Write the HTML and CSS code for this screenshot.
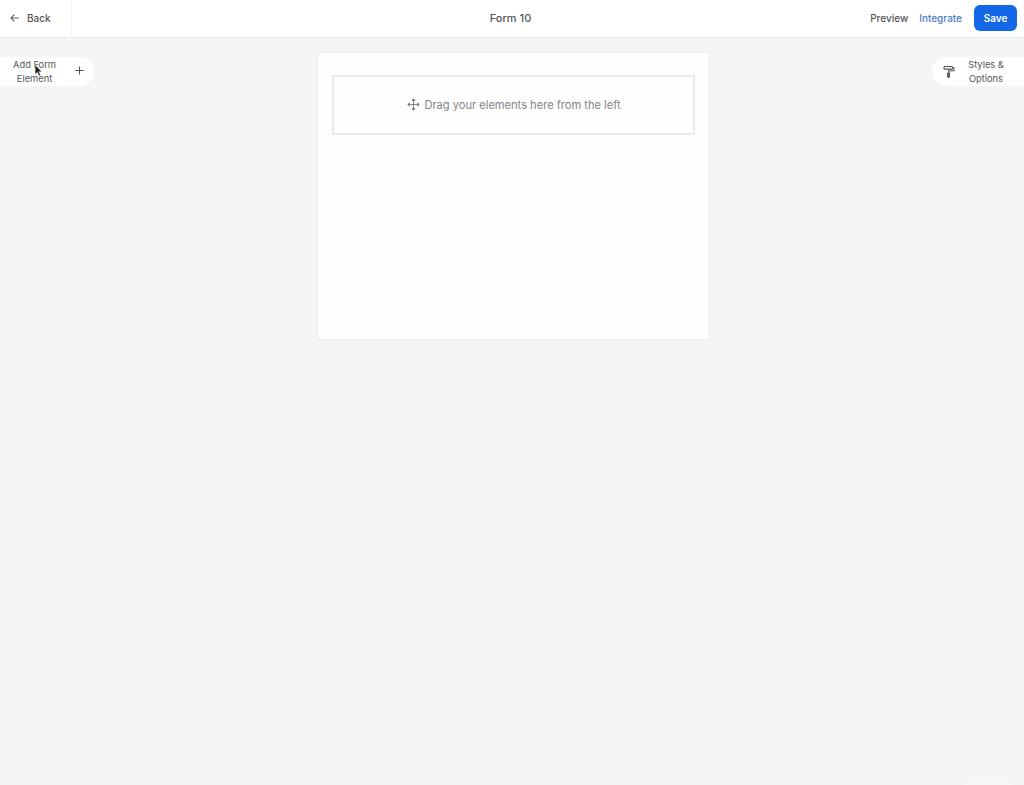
FILE: index.html
```html
<!DOCTYPE html>
<html lang="en">
  <head>
    <meta charset="UTF-8" />
    <meta name="viewport" content="width=device-width, initial-scale=1.0" />
    <title>Form 10</title>
    <link rel="stylesheet" href="styles.css">
  </head>
  <body>
    <header class="topbar">
      <a class="back-link" href="#">
        <svg class="back-icon" width="10" height="10" viewBox="0 0 10 10" fill="none" stroke="#666" stroke-width="1.2">
          <path d="M9 5H1.2M4.4 1.6 1 5l3.4 3.4" />
        </svg>
        Back
      </a>
      <div class="form-title">Form 10</div>
      <div class="actions">
        <a class="preview-link" href="#">Preview</a>
        <a class="integrate-link" href="#">Integrate</a>
        <button class="save-btn" type="button">Save</button>
      </div>
    </header>

    <main class="workspace">
      <button class="float-btn add-btn" type="button">
        <span class="float-label">Add Form Element</span>
        <svg class="plus-icon" width="9" height="9" viewBox="0 0 9 9" stroke="#555" stroke-width="1.1">
          <path d="M4.5 0.5v8M0.5 4.5h8" />
        </svg>
      </button>

      <!-- mouse pointer caught in the capture -->
      <svg class="cursor" width="9" height="13" viewBox="0 0 9 13">
        <path d="M1 0.5v10l2.3-2.1 1.6 3.6 1.7-.8-1.6-3.4h3z" fill="#222" stroke="#fff" stroke-width="0.6" />
      </svg>

      <button class="float-btn styles-btn" type="button">
        <svg width="12" height="14" viewBox="0 0 12 14" fill="none" stroke="#555" stroke-width="1.1">
          <rect x="1" y="1.5" width="8.5" height="2.6" rx="0.8" />
          <path d="M9.5 2.8h1.4v3H5.6v2" />
          <rect x="4.7" y="7.8" width="1.8" height="4.6" rx="0.8" fill="#666" />
        </svg>
        <span class="float-label">Styles &amp; Options</span>
      </button>

      <section class="canvas">
        <div class="dropzone">
          <svg width="13" height="13" viewBox="0 0 14 14" fill="none" stroke="#808080" stroke-width="1">
            <path d="M7 1.5v11M1.5 7h11" />
            <path d="M5.4 2.6 7 0.8l1.6 1.8zM5.4 11.4 7 13.2l1.6-1.8zM2.6 5.4 0.8 7l1.8 1.6zM11.4 5.4 13.2 7l-1.8 1.6z" fill="#808080" />
          </svg>
          Drag your elements here from the left
        </div>
      </section>

      <div class="corner-glow"></div>
    </main>
  </body>
</html>
```

FILE: styles.css
```css
* {
    box-sizing: border-box;
}

html, body {
    height: 100%;
}

body {
    margin: 0;
    display: flex;
    flex-direction: column;
    overflow: hidden;
    font-family: Inter, "Liberation Sans", sans-serif;
    font-size: 10px;
    color: #555;
    background-color: #F4F6F4;
}

a {
    text-decoration: none;
}

/* Top bar */
.topbar {
    position: relative;
    display: flex;
    align-items: center;
    justify-content: space-between;
    height: 38px;
    flex-shrink: 0;
    padding-bottom: 1px;
    background-color: #FFFFFF;
    border-bottom: 1px solid #EBEDEB;
}

.back-link {
    display: flex;
    align-items: center;
    gap: 7px;
    width: 72px;
    height: 36px;
    padding-left: 10px;
    color: #555;
    font-weight: 500;
    border-right: 1px solid #F2F3F2;
}

.form-title {
    position: absolute;
    left: 0;
    right: 3px;
    text-align: center;
    font-size: 11px;
    font-weight: 500;
    color: #555;
    pointer-events: none;
}

.actions {
    display: flex;
    align-items: center;
    gap: 11px;
    padding-right: 7px;
}

.preview-link {
    color: #555;
    font-weight: 500;
}

.integrate-link {
    margin-right: 1px;
    color: #4A7CCB;
    font-weight: 500;
}

.save-btn {
    width: 43px;
    height: 26px;
    border: none;
    border-radius: 6px;
    background-color: #1468E8;
    color: #FFFFFF;
    font-family: inherit;
    font-size: 10px;
    font-weight: 600;
}

/* Canvas area */
.workspace {
    position: relative;
    flex: 1;
    display: flex;
    justify-content: center;
    align-items: flex-start;
    padding: 14px 0 0 3px;
}

.float-btn {
    position: absolute;
    top: 19px;
    display: flex;
    align-items: center;
    height: 29px;
    border: none;
    background-color: #FFFFFF;
    color: #555;
    font-family: inherit;
    font-size: 9.3px;
    line-height: 14px;
    padding: 0;
}

.float-label {
    text-align: center;
}

.add-btn {
    left: 0;
    width: 94px;
    padding: 0 10px 0 8px;
    justify-content: space-between;
    border-radius: 0 15px 15px 0;
}

.add-btn .float-label {
    width: 53px;
}

.plus-icon {
    margin-top: -2px;
}

.styles-btn {
    right: 0;
    width: 92px;
    padding: 0 13px 0 11px;
    justify-content: space-between;
    border-radius: 15px 0 0 15px;
}

.styles-btn .float-label {
    width: 50px;
}

.cursor {
    position: absolute;
    left: 34px;
    top: 26px;
}

.canvas {
    width: 393px;
    height: 288px;
    padding: 22px 14px 0;
    background-color: #FEFEFE;
    border: 1px dotted #D9DCD9;
}

.dropzone {
    display: flex;
    align-items: center;
    justify-content: center;
    gap: 4px;
    height: 60px;
    padding-bottom: 1px;
    border: 2px solid #E9EAEC;
    color: #858585;
    font-size: 11.1px;
}

.dropzone svg {
    margin-left: 1px;
}

.corner-glow {
    position: absolute;
    right: 12px;
    bottom: -5px;
    width: 48px;
    height: 13px;
    border-radius: 50%;
    background-color: #F6F8F6;
}
```
